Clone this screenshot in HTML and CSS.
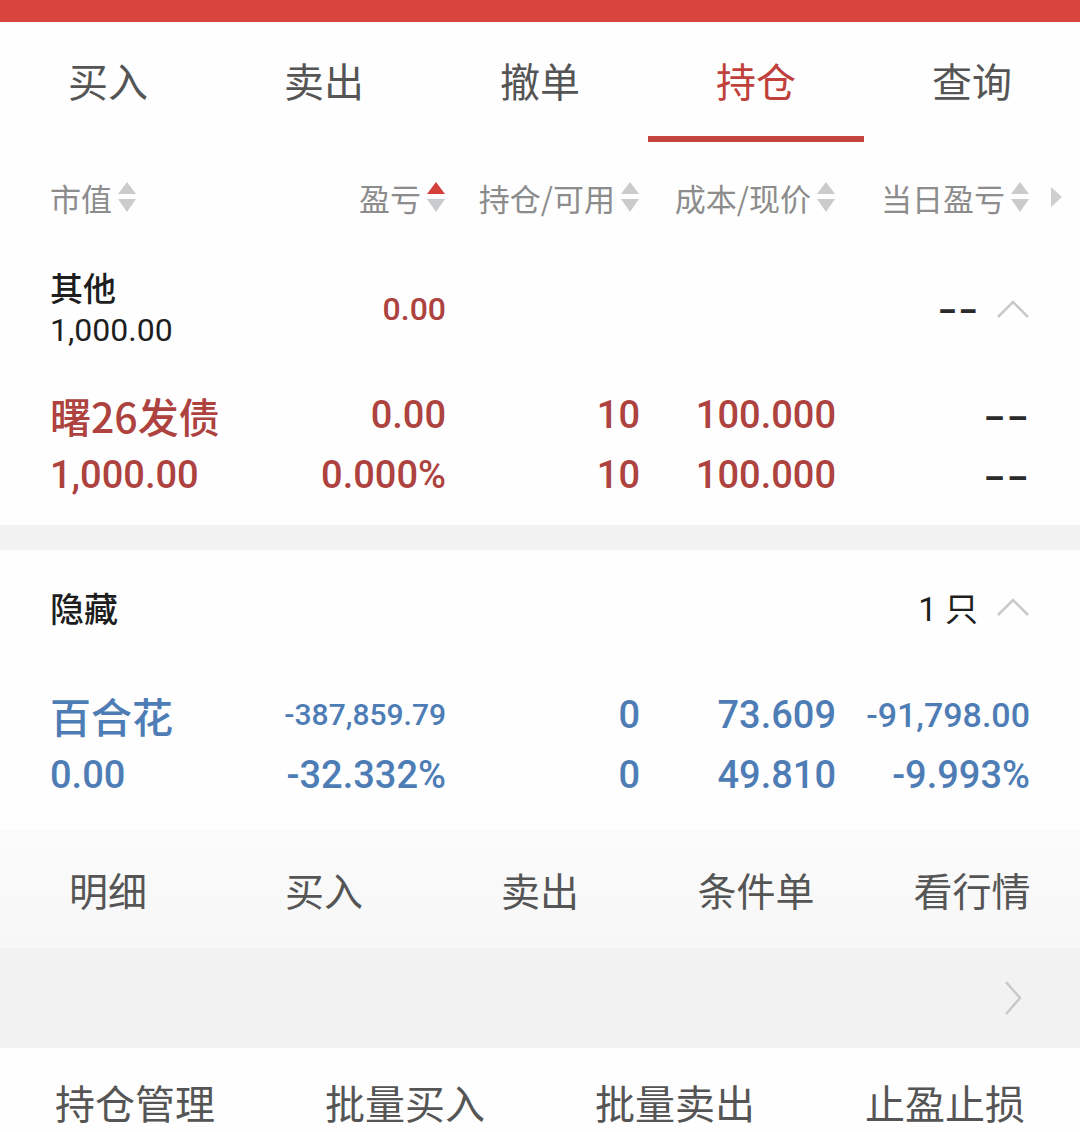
FILE: index.html
```html
<!DOCTYPE html>
<html lang="zh-CN">
<head>
<meta charset="utf-8">
<title>持仓</title>
<link rel="stylesheet" href="styles.css">
</head>
<body>
<div class="page">
  <div class="topbar"></div>

  <nav class="tabs">
    <div class="tab">买入</div>
    <div class="tab">卖出</div>
    <div class="tab">撤单</div>
    <div class="tab active">持仓</div>
    <div class="tab">查询</div>
  </nav>

  <div class="thead">
    <div class="th left">市值<svg class="sort" viewBox="0 0 20 34"><polygon class="up" points="10,2 19,14 1,14"/><polygon class="down" points="1,19 19,19 10,32"/></svg></div>
    <div class="th">盈亏<svg class="sort" viewBox="0 0 20 34"><polygon class="up on" points="10,2 19,14 1,14"/><polygon class="down cool" points="1,19 19,19 10,32"/></svg></div>
    <div class="th">持仓/可用<svg class="sort" viewBox="0 0 20 34"><polygon class="up" points="10,2 19,14 1,14"/><polygon class="down" points="1,19 19,19 10,32"/></svg></div>
    <div class="th">成本/现价<svg class="sort" viewBox="0 0 20 34"><polygon class="up" points="10,2 19,14 1,14"/><polygon class="down" points="1,19 19,19 10,32"/></svg></div>
    <div class="th">当日盈亏<svg class="sort" viewBox="0 0 20 34"><polygon class="up" points="10,2 19,14 1,14"/><polygon class="down" points="1,19 19,19 10,32"/></svg></div>
    <div class="th more"><svg class="tri" viewBox="0 0 12 22"><polygon points="1,1 12,11 1,21"/></svg></div>
  </div>

  <section class="group">
    <div class="group-row">
      <div class="cell left">
        <div class="gname">其他</div>
        <div class="gval">1,000.00</div>
      </div>
      <div class="cell red gnum">0.00</div>
      <div class="cell"></div>
      <div class="cell"></div>
      <div class="cell gend"><span class="dash gdash">--</span><svg class="chev" viewBox="0 0 34 20"><polyline points="2,18 17,3 32,18"/></svg></div>
    </div>

    <div class="item red">
      <div class="cell left">
        <div class="name">曙26发债</div>
        <div class="num">1,000.00</div>
      </div>
      <div class="cell">
        <div class="num">0.00</div>
        <div class="num">0.000%</div>
      </div>
      <div class="cell">
        <div class="num">10</div>
        <div class="num">10</div>
      </div>
      <div class="cell">
        <div class="num">100.000</div>
        <div class="num">100.000</div>
      </div>
      <div class="cell">
        <div class="num dark"><span class="dash">--</span></div>
        <div class="num dark"><span class="dash">--</span></div>
      </div>
    </div>
  </section>

  <div class="gap"></div>

  <section class="group">
    <div class="hidden-head">
      <div class="gname">隐藏</div>
      <div class="hcount">1 只<svg class="chev" viewBox="0 0 34 20"><polyline points="2,18 17,3 32,18"/></svg></div>
    </div>

    <div class="item blue">
      <div class="cell left">
        <div class="name">百合花</div>
        <div class="num">0.00</div>
      </div>
      <div class="cell">
        <div class="num small">-387,859.79</div>
        <div class="num">-32.332%</div>
      </div>
      <div class="cell">
        <div class="num">0</div>
        <div class="num">0</div>
      </div>
      <div class="cell">
        <div class="num">73.609</div>
        <div class="num">49.810</div>
      </div>
      <div class="cell">
        <div class="num mid">-91,798.00</div>
        <div class="num">-9.993%</div>
      </div>
    </div>
  </section>

  <div class="actions">
    <div class="act">明细</div>
    <div class="act">买入</div>
    <div class="act">卖出</div>
    <div class="act">条件单</div>
    <div class="act">看行情</div>
  </div>

  <div class="banner">
    <svg class="rchev" viewBox="0 0 18 36"><polyline points="2,2 16,18 2,34"/></svg>
  </div>

  <div class="tools">
    <div class="tool">持仓管理</div>
    <div class="tool">批量买入</div>
    <div class="tool">批量卖出</div>
    <div class="tool">止盈止损</div>
  </div>
</div>
</body>
</html>
```

FILE: styles.css
```css
* { box-sizing: border-box; }

html, body {
  margin: 0;
  padding: 0;
  background: #fefefe;
}

body {
  font-family: "Roboto", "Noto Sans CJK SC", sans-serif;
  color: #222;
  overflow: hidden;
}

.page {
  width: 1080px;
  height: 1132px;
  overflow: hidden;
}

.topbar {
  height: 22px;
  background: #da443e;
}

/* tabs */
.tabs {
  display: grid;
  grid-template-columns: repeat(5, 216px);
  height: 120px;
}

.tab {
  display: flex;
  align-items: center;
  justify-content: center;
  padding-top: 2px;
  border-bottom: 6px solid transparent;
  font-family: "Noto Sans CJK SC", sans-serif;
  font-size: 40px;
  color: #555;
}

.tab.active {
  color: #c0413c;
  border-bottom-color: #c4433d;
}

/* header */
.thead {
  display: grid;
  grid-template-columns: 200px 196px 194px 196px 194px 32px;
  padding: 0 18px 0 50px;
  height: 110px;
  align-items: center;
}

.th {
  display: flex;
  align-items: center;
  justify-content: flex-end;
  gap: 5px;
  font-family: "Noto Sans CJK SC", sans-serif;
  font-size: 31px;
  color: #8c8c8c;
}

.th.left { justify-content: flex-start; }

.sort {
  width: 20px;
  height: 34px;
  flex: none;
}

.sort polygon { fill: #cbcbcb; }
.sort polygon.on { fill: #d4403a; }
.sort polygon.cool { fill: #c9c9d0; }

.tri {
  width: 12px;
  height: 22px;
}

.tri polygon { fill: #cfcfcf; }

/* grids */
.group-row,
.item {
  display: grid;
  grid-template-columns: 200px 196px 194px 196px 194px;
  padding: 0 50px;
}

.cell {
  display: flex;
  flex-direction: column;
  align-items: flex-end;
  justify-content: center;
}

.cell.left { align-items: flex-start; }

.group-row {
  height: 110px;
  padding-top: 14px;
  padding-bottom: 10px;
  align-items: center;
}

.gname {
  font-family: "Noto Sans CJK SC", sans-serif;
  font-size: 33px;
  font-weight: 500;
  line-height: 43px;
  color: #1e1e1e;
}

.gval {
  font-size: 32px;
  line-height: 43px;
  color: #1e1e1e;
}

.gnum {
  font-size: 32px;
  font-weight: 500;
}

.gend {
  flex-direction: row;
  align-items: center;
  justify-content: flex-end;
  gap: 17px;
}

.dash {
  font-size: 34px;
  font-weight: 700;
  color: #2a2a2a;
  display: inline-block;
  transform: scaleX(1.75);
  transform-origin: right center;
}

.dash.gdash {
  transform: scaleX(1.55);
}

.chev {
  width: 34px;
  height: 20px;
}

.chev polyline,
.rchev polyline {
  fill: none;
  stroke: #c9c9c9;
  stroke-width: 2.5;
}

.item {
  padding-top: 23px;
  padding-bottom: 20px;
}

.item .num,
.item .name {
  line-height: 60px;
  height: 60px;
}

.name {
  font-family: "Noto Sans CJK SC", sans-serif;
  font-size: 41px;
  font-weight: 500;
}

.num {
  font-size: 38px;
  font-weight: 500;
  white-space: nowrap;
}

.num.small { font-size: 30px; }
.num.mid { font-size: 34px; }

.red { color: #ad423e; }
.blue { color: #4e7db6; }

.gap {
  height: 25px;
  background: #f2f2f2;
}

.hidden-head {
  display: flex;
  align-items: center;
  justify-content: space-between;
  height: 114px;
  padding: 0 50px;
}

.hidden-head .gname { font-size: 34px; }

.hcount {
  display: flex;
  align-items: center;
  gap: 18px;
  font-family: "Roboto", "Noto Sans CJK SC", sans-serif;
  font-size: 33px;
  color: #1e1e1e;
}

section .item.blue {
  padding-top: 21px;
  padding-bottom: 25px;
}

/* actions */
.actions {
  display: grid;
  grid-template-columns: repeat(5, 216px);
  height: 118px;
  background: linear-gradient(#fbfbfb, #f7f7f7);
  align-items: center;
}

.act {
  text-align: center;
  font-family: "Noto Sans CJK SC", sans-serif;
  font-size: 39px;
  color: #555;
}

.banner {
  height: 100px;
  background: #f2f2f2;
  display: flex;
  align-items: center;
  justify-content: flex-end;
  padding-right: 58px;
}

.rchev {
  width: 18px;
  height: 36px;
}

.tools {
  display: grid;
  grid-template-columns: repeat(4, 270px);
  height: 74px;
  align-items: end;
  background: #fefefe;
}

.tool {
  text-align: center;
  font-family: "Noto Sans CJK SC", sans-serif;
  font-size: 40px;
  line-height: 40px;
  color: #555;
}
```
